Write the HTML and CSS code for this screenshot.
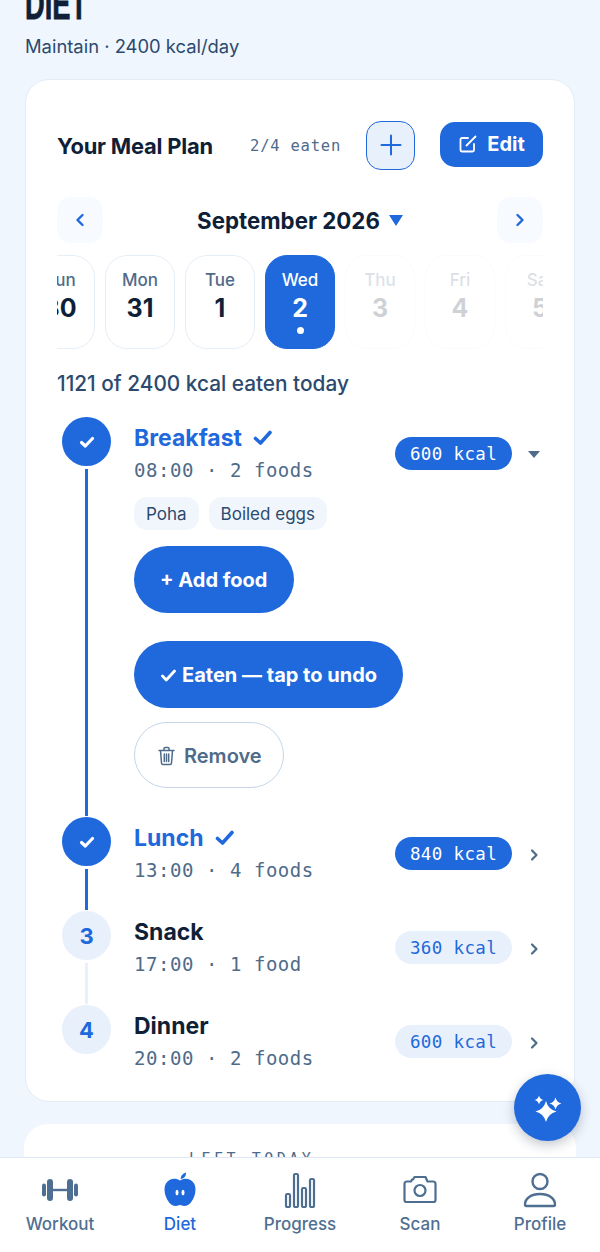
FILE: index.html

```html
<!DOCTYPE html>
<html lang="en">
<head>
<meta charset="utf-8"/>
<meta content="width=device-width, initial-scale=1.0" name="viewport"/>
<title>Diet</title>
<link rel="stylesheet" href="styles.css">
</head>
<body>
<main class="page">
  <h1 class="page-title"><span>DIET</span></h1>
  <p class="page-sub">Maintain · 2400 kcal/day</p>

  <section class="card plan">
    <div class="plan-head">
      <h2>Your Meal Plan</h2>
      <span class="plan-count">2/4 eaten</span>
      <button class="btn-plus" aria-label="Add meal">
        <svg width="22" height="22" viewBox="0 0 22 22"><path d="M11 1.500v19M1.500 11h19" stroke="#1f69dc" stroke-width="2" stroke-linecap="round"/></svg>
      </button>
      <button class="btn-edit">
        <svg width="20" height="20" viewBox="0 0 20 20" fill="none" stroke="#fff" stroke-width="1.800" stroke-linecap="round" stroke-linejoin="round"><path d="M10 4H4a1.500 1.500 0 0 0-1.500 1.500V16A1.500 1.500 0 0 0 4 17.500h10.500A1.500 1.500 0 0 0 16 16v-6"/><path d="M8.500 11.500 17.500 2.500"/></svg>
        Edit
      </button>
    </div>

    <div class="month-row">
      <button class="month-nav"><svg width="10" height="14" viewBox="0 0 10 14"><path d="M7.500 2 2.500 7l5 5" fill="none" stroke="#1f69dc" stroke-width="2.400" stroke-linecap="round" stroke-linejoin="round"/></svg></button>
      <div class="month-name">September 2026 <i class="tri"></i></div>
      <button class="month-nav"><svg width="10" height="14" viewBox="0 0 10 14"><path d="M2.500 2l5 5-5 5" fill="none" stroke="#1f69dc" stroke-width="2.400" stroke-linecap="round" stroke-linejoin="round"/></svg></button>
    </div>

    <div class="days">
      <div class="days-track">
        <div class="day"><span>Sun</span><b>30</b></div>
        <div class="day"><span>Mon</span><b>31</b></div>
        <div class="day"><span>Tue</span><b>1</b></div>
        <div class="day active"><span>Wed</span><b>2</b><i></i></div>
        <div class="day future"><span>Thu</span><b>3</b></div>
        <div class="day future"><span>Fri</span><b>4</b></div>
        <div class="day future"><span>Sat</span><b>5</b></div>
      </div>
    </div>

    <p class="eaten-line">1121 of 2400 kcal eaten today</p>

    <div class="timeline">
      <div class="meal open">
        <div class="gutter">
          <div class="dot done"><svg width="18" height="18" viewBox="0 0 18 18"><path d="M3.500 9.500 7.300 13 14.500 5.500" fill="none" stroke="#fff" stroke-width="3.200" stroke-linecap="round" stroke-linejoin="round"/></svg></div>
          <div class="line done"></div>
        </div>
        <div class="meal-body">
          <div class="meal-top">
            <div class="meal-text">
              <div class="meal-name done">Breakfast <svg width="20" height="18" viewBox="0 0 20 18"><path d="M2.500 9.500 7.500 14 17 3.500" fill="none" stroke="#1f69dc" stroke-width="3.600" stroke-linecap="round" stroke-linejoin="round"/></svg></div>
              <div class="meal-meta">08:00 · 2 foods</div>
            </div>
            <span class="kcal on">600 kcal</span>
            <span class="toggle"><i class="tri-grey"></i></span>
          </div>
          <div class="chips"><span>Poha</span><span>Boiled eggs</span></div>
          <button class="pill fill add">+ Add food</button>
          <button class="pill fill undo"><svg width="15" height="13" viewBox="0 0 15 13"><path d="M1.500 7 5.300 11 13.500 2" fill="none" stroke="#fff" stroke-width="2.800" stroke-linecap="round" stroke-linejoin="round"/></svg>Eaten — tap to undo</button>
          <button class="pill ghost">
            <svg width="17" height="20" viewBox="0 0 17 20" fill="none" stroke="#4f6b8a" stroke-width="1.500" stroke-linecap="round" stroke-linejoin="round"><path d="M1 4.500h15M6 4.500V2.500a1 1 0 0 1 1-1h3a1 1 0 0 1 1 1v2M2.500 4.500l1 12.500a1.500 1.500 0 0 0 1.500 1.500h7a1.500 1.500 0 0 0 1.500-1.500l1-12.500M6.300 8v7.500M8.500 8v7.500M10.700 8v7.500"/></svg>
            Remove
          </button>
        </div>
      </div>

      <div class="meal">
        <div class="gutter">
          <div class="dot done"><svg width="18" height="18" viewBox="0 0 18 18"><path d="M3.500 9.500 7.300 13 14.500 5.500" fill="none" stroke="#fff" stroke-width="3.200" stroke-linecap="round" stroke-linejoin="round"/></svg></div>
          <div class="line done"></div>
        </div>
        <div class="meal-body">
          <div class="meal-top">
            <div class="meal-text">
              <div class="meal-name done">Lunch <svg width="20" height="18" viewBox="0 0 20 18"><path d="M2.500 9.500 7.500 14 17 3.500" fill="none" stroke="#1f69dc" stroke-width="3.600" stroke-linecap="round" stroke-linejoin="round"/></svg></div>
              <div class="meal-meta">13:00 · 4 foods</div>
            </div>
            <span class="kcal on">840 kcal</span>
            <span class="toggle"><svg width="10" height="14" viewBox="0 0 10 14"><path d="M3 2.500 7.500 7 3 11.500" fill="none" stroke="#4f6b8a" stroke-width="2.200" stroke-linecap="round" stroke-linejoin="round"/></svg></span>
          </div>
        </div>
      </div>

      <div class="meal">
        <div class="gutter">
          <div class="dot">3</div>
          <div class="line"></div>
        </div>
        <div class="meal-body">
          <div class="meal-top">
            <div class="meal-text">
              <div class="meal-name">Snack</div>
              <div class="meal-meta">17:00 · 1 food</div>
            </div>
            <span class="kcal">360 kcal</span>
            <span class="toggle"><svg width="10" height="14" viewBox="0 0 10 14"><path d="M3 2.500 7.500 7 3 11.500" fill="none" stroke="#4f6b8a" stroke-width="2.200" stroke-linecap="round" stroke-linejoin="round"/></svg></span>
          </div>
        </div>
      </div>

      <div class="meal last">
        <div class="gutter">
          <div class="dot">4</div>
        </div>
        <div class="meal-body">
          <div class="meal-top">
            <div class="meal-text">
              <div class="meal-name">Dinner</div>
              <div class="meal-meta">20:00 · 2 foods</div>
            </div>
            <span class="kcal">600 kcal</span>
            <span class="toggle"><svg width="10" height="14" viewBox="0 0 10 14"><path d="M3 2.500 7.500 7 3 11.500" fill="none" stroke="#4f6b8a" stroke-width="2.200" stroke-linecap="round" stroke-linejoin="round"/></svg></span>
          </div>
        </div>
      </div>
    </div>
  </section>

  <section class="card left-today">
    <p>LEFT TODAY</p>
  </section>
</main>

<button class="fab" aria-label="AI">
  <svg width="34" height="34" viewBox="0 0 34 34" fill="#fff"><path d="M15 10Q17.100 18.400 25.500 20.500Q17.100 22.600 15 31Q12.900 22.600 4.500 20.500Q12.900 18.400 15 10z"/><path d="M24.500 6.500Q25.700 11.300 30.500 12.500Q25.700 13.700 24.500 18.500Q23.300 13.700 18.500 12.500Q23.300 11.300 24.500 6.500z"/><path d="M8 4.500Q8.900 8.100 12.500 9Q8.900 9.900 8 13.500Q7.100 9.900 3.500 9Q7.100 8.100 8 4.500z"/></svg>
</button>

<nav class="tabbar">
  <a class="tab">
    <svg width="38" height="36" viewBox="0 0 38 36" fill="#4f6f92"><rect x="1" y="11.500" width="4" height="13" rx="2"/><rect x="6" y="7" width="6" height="22" rx="3"/><rect x="26" y="7" width="6" height="22" rx="3"/><rect x="33" y="11.500" width="4" height="13" rx="2"/><rect x="12" y="16.800" width="14" height="2.400"/></svg>
    <span>Workout</span>
  </a>
  <a class="tab active">
    <svg width="38" height="36" viewBox="0 0 38 36"><path d="M19 8.500c3-2 7-2.500 10.500-.5 3.500 2 5 5.500 5 9.500 0 5-2 10-5 13.500-2 2.300-4.500 3.200-6.500 3-1.500-.2-2.500-1-4-1s-2.500.8-4 1c-2 .2-4.500-.7-6.500-3-3-3.500-5-8.500-5-13.500 0-4 1.500-7.500 5-9.500 3.500-2 7.500-1.500 10.500.5z" fill="#1f69dc"/><path d="M19.500 7c.3-3 2-5.500 5.500-6.500.3 3-1.500 6-5.500 6.500z" fill="#1f69dc"/><ellipse cx="16" cy="20.500" rx="1.500" ry="2.700" fill="#fff"/><ellipse cx="22" cy="20.500" rx="1.500" ry="2.700" fill="#fff"/></svg>
    <span>Diet</span>
  </a>
  <a class="tab">
    <svg width="38" height="36" viewBox="0 0 38 36" fill="none" stroke="#4f6f92" stroke-width="2.200"><rect x="5" y="22" width="4" height="13" rx="1.300"/><rect x="13" y="2" width="4" height="33" rx="1.300"/><rect x="21" y="16" width="4" height="19" rx="1.300"/><rect x="29" y="7" width="4" height="28" rx="1.300"/></svg>
    <span>Progress</span>
  </a>
  <a class="tab">
    <svg width="38" height="36" viewBox="0 0 38 36" fill="none" stroke="#4f6f92" stroke-width="2.200" stroke-linejoin="round"><path d="M6 9.500h4l1-2h1l1.500-2.500h11l2 4.500H32a2.500 2.500 0 0 1 2.500 2.500v16a2 2 0 0 1-2 2h-27a2 2 0 0 1-2-2V12A2.500 2.500 0 0 1 6 9.500z"/><circle cx="19" cy="18.500" r="5.500"/></svg>
    <span>Scan</span>
  </a>
  <a class="tab">
    <svg width="38" height="36" viewBox="0 0 38 36" fill="none" stroke="#4f6f92" stroke-width="2.400" stroke-linejoin="round"><circle cx="19" cy="9.500" r="7.500"/><path d="M4 32.500c0-6 6-10.500 15-10.500s15 4.500 15 10.500c0 1-.5 1.500-1.500 1.500h-27c-1 0-1.500-.5-1.500-1.500z"/></svg>
    <span>Profile</span>
  </a>
</nav>
</body>
</html>
```

FILE: styles.css

```css
* {
  box-sizing: border-box;
}
html, body {
  margin: 0;
  height: 1252px;
  overflow: hidden;
}
body {
  font-family: Inter, sans-serif;
  background: #f0f6fe;
  color: #0f1f38;
}
button {
  font-family: inherit;
  border: 0;
  padding: 0;
  cursor: pointer;
}
.page {
  padding: 0 24px;
}

/* header, scrolled partly off the top */
.page-title {
  margin: -18px 0 0 1px;
  height: 44px;
  font-family: "Liberation Sans", sans-serif;
  font-size: 44px;
  line-height: 44px;
  font-weight: 700;
  color: #0f1f38;
}
.page-title span {
  display: inline-block;
  transform: scaleX(0.62);
  transform-origin: left;
  -webkit-text-stroke: 0.8px #0f1f38;
}
.page-sub {
  margin: 6px 0 0 1px;
  font-size: 18.400px;
  line-height: 28px;
  color: #2c4a6e;
}

.card {
  background: #fff;
  border: 1px solid #e3ecf7;
  border-radius: 24px;
}
.plan {
  margin: 19px 1px 0;
  padding: 40px 31px 0;
  height: 1023px;
}
.plan-head {
  display: flex;
  align-items: center;
  height: 50px;
}
.plan-head h2 {
  margin: 0;
  padding-top: 1px;
  font-size: 21.900px;
  font-weight: 700;
  letter-spacing: -0.2px;
  flex: 1;
}
.plan-count {
  padding-top: 1px;
  font-family: "DejaVu Sans Mono", monospace;
  font-size: 15.500px;
  letter-spacing: 0.770px;
  color: #4f6b8a;
  margin-right: 25px;
}
.btn-plus {
  width: 49px;
  height: 49px;
  border: 1.500px solid #1f69dc;
  border-radius: 15px;
  background: #e8f0fb;
  margin-right: 25px;
  display: flex;
  align-items: center;
  justify-content: center;
}
.btn-edit {
  width: 103px;
  height: 45px;
  margin-top: -2px;
  border-radius: 15px;
  background: #1f69dc;
  color: #fff;
  font-size: 20px;
  font-weight: 700;
  display: flex;
  align-items: center;
  justify-content: center;
  gap: 9px;
}

.month-row {
  display: flex;
  align-items: center;
  justify-content: space-between;
  margin-top: 27px;
}
.month-nav {
  width: 46px;
  height: 46px;
  border-radius: 14px;
  background: #f7fafe;
  display: flex;
  align-items: center;
  justify-content: center;
}
.month-name {
  font-size: 22.300px;
  font-weight: 700;
  display: flex;
  align-items: center;
  gap: 9px;
}
.tri {
  width: 0;
  height: 0;
  border-left: 7px solid transparent;
  border-right: 7px solid transparent;
  border-top: 11px solid #1f69dc;
}

.days {
  margin-top: 12px;
  overflow: hidden;
}
.days-track {
  display: flex;
  gap: 10px;
  margin-left: -32px;
}
.day {
  flex: 0 0 70px;
  height: 94px;
  border: 1.500px solid #e6eef8;
  border-radius: 22px;
  display: flex;
  flex-direction: column;
  align-items: center;
  padding-top: 13px;
}
.day span {
  font-size: 17px;
  line-height: 22px;
  font-weight: 500;
  color: #4f6b8a;
}
.day b {
  font-size: 25px;
  line-height: 32px;
  font-weight: 700;
  margin-top: 1px;
}
.day.active {
  background: #1f69dc;
  border-color: #1f69dc;
}
.day.active span,
.day.active b {
  color: #fff;
}
.day.active i {
  width: 7px;
  height: 7px;
  border-radius: 50%;
  background: #fff;
  margin-top: 3px;
}
.day.future {
  opacity: 0.2;
}

.eaten-line {
  margin: 22px 0 0;
  font-size: 20.800px;
  line-height: 26px;
  font-weight: 500;
  color: #2c4a6e;
}

.timeline {
  margin-top: 20px;
  padding-left: 5px;
}
.meal {
  display: flex;
  gap: 23px;
  min-height: 94px;
}
.gutter {
  flex: 0 0 49px;
  display: flex;
  flex-direction: column;
  align-items: center;
}
.dot {
  flex: 0 0 49px;
  width: 49px;
  border-radius: 50%;
  background: #e8f0fb;
  color: #1f69dc;
  font-size: 22px;
  font-weight: 700;
  display: flex;
  align-items: center;
  justify-content: center;
}
.dot.done {
  background: #1f69dc;
}
.line {
  flex: 1;
  width: 3px;
  margin: 3px 0 1px;
  background: #e8f0fb;
}
.line.done {
  background: #1f69dc;
}
.meal-body {
  flex: 1;
  min-width: 0;
}
.meal.open .meal-body {
  padding-bottom: 29px;
}
.meal-top {
  display: flex;
  align-items: center;
  padding-top: 6px;
}
.meal-text {
  flex: 1;
}
.meal-name {
  font-size: 23px;
  line-height: 30px;
  font-weight: 700;
  display: flex;
  align-items: center;
  gap: 11px;
}
.meal-name.done {
  color: #1f69dc;
}
.meal-meta {
  font-family: "DejaVu Sans Mono", monospace;
  font-size: 19px;
  line-height: 30px;
  letter-spacing: 0.550px;
  color: #4f6b8a;
  margin-top: 2px;
  margin-bottom: 1px;
}
.kcal {
  width: 117px;
  height: 33px;
  padding-top: 1px;
  border-radius: 17px;
  background: #e8f0fb;
  color: #1f69dc;
  font-family: "DejaVu Sans Mono", monospace;
  font-size: 17.500px;
  letter-spacing: 0.350px;
  display: flex;
  align-items: center;
  justify-content: center;
  margin-top: -3px;
}
.kcal.on {
  background: #1f69dc;
  color: #fff;
}
.toggle {
  width: 31px;
  display: flex;
  justify-content: flex-end;
  padding-right: 4px;
}
.tri-grey {
  width: 0;
  height: 0;
  border-left: 6.500px solid transparent;
  border-right: 6.500px solid transparent;
  border-top: 7px solid #4f6b8a;
  margin-right: -1px;
}
.chips {
  display: flex;
  gap: 10px;
  margin-top: 11px;
}
.chips span {
  height: 33px;
  padding: 1px 12px 0;
  border-radius: 13px;
  background: #f1f6fd;
  color: #2c4a6e;
  font-size: 17px;
  line-height: 32px;
}
.pill {
  display: flex;
  align-items: center;
  border-radius: 34px;
  font-size: 20px;
  font-weight: 700;
  height: 67px;
}
.pill.fill {
  background: #1f69dc;
  color: #fff;
}
.add {
  margin-top: 16px;
  padding: 1px 27px 0 26px;
}
.undo {
  margin-top: 28px;
  padding: 1px 26px 0 27px;
  gap: 6px;
}
.ghost {
  margin-top: 14px;
  padding: 1px 21px 0 23px;
  gap: 9px;
  height: 66px;
  background: #fff;
  border: 1.500px solid #c6d6e8;
  color: #4f6b8a;
  font-size: 20px;
  font-weight: 600;
}

.left-today {
  margin: 22px 0 0;
  height: 200px;
  border: 0;
  padding: 26px 0 0 165px;
}
.left-today p {
  margin: 0;
  font-family: "DejaVu Sans Mono", monospace;
  font-size: 15px;
  line-height: 18px;
  letter-spacing: 3.500px;
  color: #4f6b8a;
}

/* overlays */
.fab {
  position: fixed;
  left: 514px;
  top: 1074px;
  width: 67px;
  height: 67px;
  border-radius: 50%;
  background: #1f69dc;
  box-shadow: 0 4px 12px rgba(15, 31, 56, 0.25);
  display: flex;
  align-items: center;
  justify-content: center;
  z-index: 3;
}
.tabbar {
  position: fixed;
  left: 0;
  right: 0;
  bottom: 0;
  height: 95px;
  background: #fff;
  border-top: 1px solid #dfe9f6;
  display: grid;
  grid-template-columns: repeat(5, 1fr);
  z-index: 2;
}
.tab {
  display: flex;
  flex-direction: column;
  align-items: center;
  padding-top: 14px;
  color: #4f6f92;
  font-size: 17px;
  font-weight: 500;
}
.tab span {
  line-height: 22px;
  margin-top: 5px;
}
.tab.active {
  color: #1f69dc;
}
```
